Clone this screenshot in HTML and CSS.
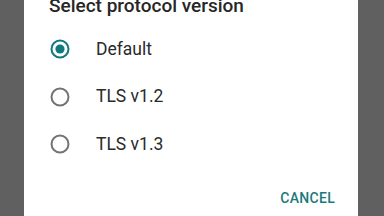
FILE: index.html
```html
<!DOCTYPE html>
<html lang="en">
<head>
    <meta charset="UTF-8">
    <meta name="viewport" content="width=device-width, initial-scale=1.0">
    <title>Select protocol version</title>
    <link rel="stylesheet" href="styles.css">
</head>
<body>

    <!-- DIALOG -->
    <div class="dialog">
        <div class="dialog-title">Select protocol version</div>

        <div class="choice-list">
            <div class="choice">
                <svg class="radio" width="20" height="20" viewBox="0 0 20 20">
                    <circle cx="10" cy="10" r="8.5" fill="none" stroke="#10797e" stroke-width="2"/>
                    <circle cx="10" cy="10" r="4.6" fill="#10797e"/>
                </svg>
                <span class="choice-label">Default</span>
            </div>
            <div class="choice">
                <svg class="radio" width="20" height="20" viewBox="0 0 20 20">
                    <circle cx="10" cy="10" r="8.5" fill="none" stroke="#737373" stroke-width="2"/>
                </svg>
                <span class="choice-label">TLS v1.2</span>
            </div>
            <div class="choice">
                <svg class="radio" width="20" height="20" viewBox="0 0 20 20">
                    <circle cx="10" cy="10" r="8.5" fill="none" stroke="#737373" stroke-width="2"/>
                </svg>
                <span class="choice-label">TLS v1.3</span>
            </div>
        </div>

        <div class="dialog-actions">
            <button class="text-button">CANCEL</button>
        </div>
    </div>

</body>
</html>
```

FILE: styles.css
```css
body {
    font-family: Roboto, "Noto Sans", Arial, sans-serif;
    margin: 0;
    background-color: #606060;
    height: 216px;
    overflow: hidden;
}
.dialog {
    background-color: white;
    margin-left: 24px;
    margin-top: -6px;
    width: 334px;
    height: 260px;
}
.dialog-title {
    font-size: 19px;
    font-weight: 500;
    line-height: 24px;
    color: #262626;
    padding-left: 25px;
}
.choice-list {
    margin-top: 7px;
}
.choice {
    display: flex;
    align-items: center;
    height: 47.5px;
    padding-left: 26px;
}
.radio {
    flex: none;
    margin-top: 0.5px;
}
.choice-label {
    margin-left: 26px;
    font-size: 17.5px;
    color: #2a2a2a;
}
.dialog-actions {
    display: flex;
    justify-content: flex-end;
    padding: 12px 15px 0 0;
}
.text-button {
    font-family: Roboto, "Noto Sans", Arial, sans-serif;
    background: none;
    border: none;
    height: 36px;
    padding: 0 8px;
    font-size: 14px;
    font-weight: 500;
    letter-spacing: 0.3px;
    color: #1c7a7c;
}
```
